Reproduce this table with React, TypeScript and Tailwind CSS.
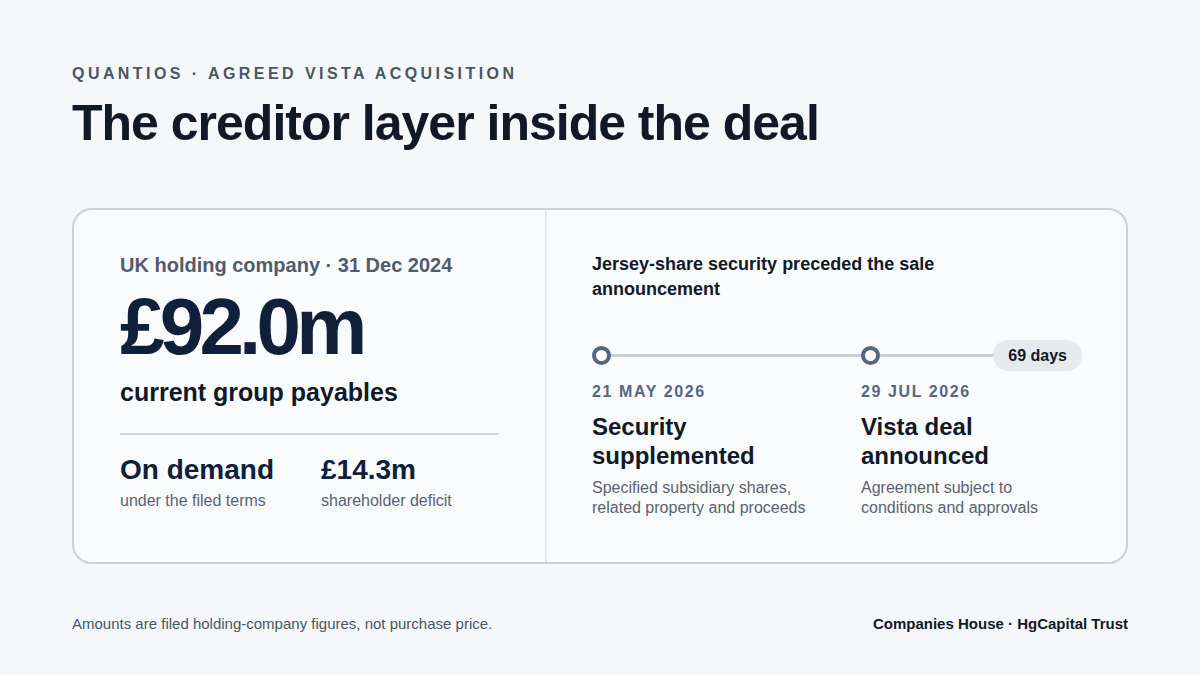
export default function App() {
  return (
    <div className="w-[1200px] h-[675px] bg-[#f5f7fa] px-[72px] pt-[64px] font-['Liberation_Sans',Arial,sans-serif]">
      {/* Header */}
      <p className="text-[16px] leading-[20px] font-bold tracking-[0.215em] text-[#4b5563] uppercase">
        Quantios · Agreed Vista acquisition
      </p>
      <h1 className="mt-[12px] text-[50px] leading-[55px] font-bold tracking-[-0.02em] text-[#111827]">
        The creditor layer inside the deal
      </h1>

      {/* Card */}
      <div className="mt-[57px] h-[356px] flex rounded-[20px] border-2 border-[#cbd0d7] bg-[#fafbfd]">
        {/* Left panel */}
        <div className="w-[473px] shrink-0 border-r-2 border-[#e3e6eb] pt-[41px] px-[46px]">
          <p className="text-[20px] leading-[28px] font-bold text-[#525b6b]">
            UK holding company · 31 Dec 2024
          </p>
          <p className="mt-[8px] text-[80px] leading-[80px] font-bold tracking-[-0.06em] text-[#10203a]">
            £92.0m
          </p>
          <p className="mt-[10px] text-[25px] leading-[30px] font-bold text-[#111827]">
            current group payables
          </p>
          <div className="mt-[26px] h-[2px] bg-[#d4d8de]" />
          <div className="mt-[18px] flex gap-[47px]">
            <div>
              <p className="text-[28px] leading-[34px] font-bold text-[#10203a]">On demand</p>
              <p className="mt-[4px] text-[16px] leading-[20px] text-[#5b6270]">under the filed terms</p>
            </div>
            <div>
              <p className="text-[28px] leading-[34px] font-bold text-[#10203a]">£14.3m</p>
              <p className="mt-[4px] text-[16px] leading-[20px] text-[#5b6270]">shareholder deficit</p>
            </div>
          </div>
        </div>

        {/* Right panel */}
        <div className="flex-1 pt-[42px] pl-[45px] pr-[44px]">
          <p className="max-w-[420px] text-[18px] leading-[25px] font-bold text-[#111827]">
            Jersey-share security preceded the sale announcement
          </p>

          {/* Timeline */}
          <div className="mt-[38px] grid grid-cols-[269px_1fr] items-center h-[31px]">
            <div className="flex items-center">
              <span className="w-[19px] h-[19px] shrink-0 rounded-full border-4 border-[#56667f] bg-white" />
              <span className="flex-1 h-[3px] bg-[#c9ced6]" />
            </div>
            <div className="flex items-center">
              <span className="w-[19px] h-[19px] shrink-0 rounded-full border-4 border-[#56667f] bg-white" />
              <span className="flex-1 h-[3px] bg-[#c9ced6]" />
              <span className="h-[31px] px-[15px] flex items-center rounded-full bg-[#e6e9ee] text-[16px] font-bold text-[#111827]">
                69 days
              </span>
            </div>
          </div>

          <div className="mt-[11px] grid grid-cols-[269px_1fr]">
            <div className="pr-[24px]">
              <p className="text-[16px] leading-[20px] font-bold tracking-[0.1em] text-[#56667f]">21 MAY 2026</p>
              <p className="mt-[10px] text-[24px] leading-[29px] font-bold text-[#111827]">Security supplemented</p>
              <p className="mt-[8px] text-[16px] leading-[20px] text-[#5b6270]">
                Specified subsidiary shares, related property and proceeds
              </p>
            </div>
            <div>
              <p className="text-[16px] leading-[20px] font-bold tracking-[0.1em] text-[#56667f]">29 JUL 2026</p>
              <p className="mt-[10px] text-[24px] leading-[29px] font-bold text-[#111827]">Vista deal announced</p>
              <p className="mt-[8px] text-[16px] leading-[20px] text-[#5b6270]">
                Agreement subject to conditions and approvals
              </p>
            </div>
          </div>
        </div>
      </div>

      {/* Footer */}
      <div className="mt-[50px] flex justify-between items-center text-[15px] leading-[20px]">
        <p className="text-[#4b5563]">Amounts are filed holding-company figures, not purchase price.</p>
        <p className="font-bold text-[#111827]">Companies House · HgCapital Trust</p>
      </div>
    </div>
  );
}
